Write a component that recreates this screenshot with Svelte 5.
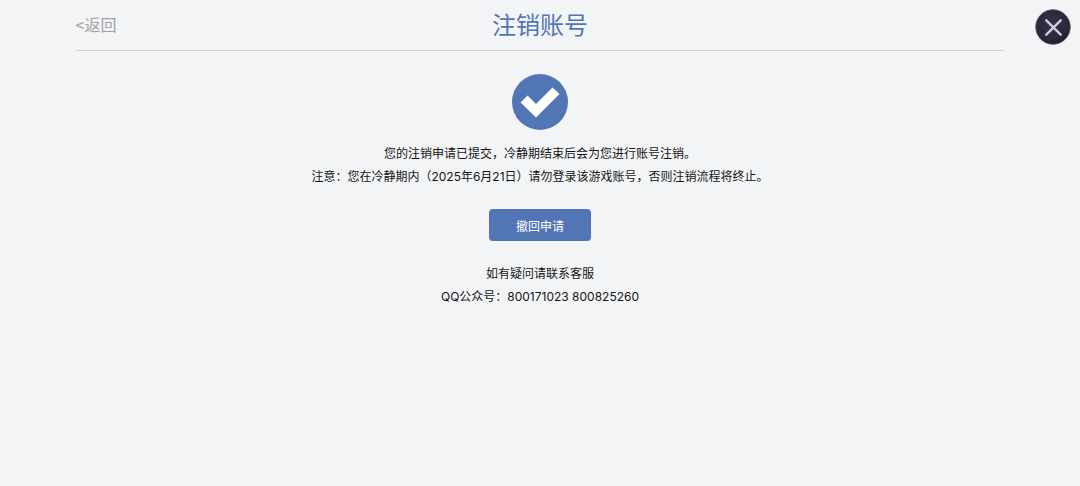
<script lang="ts">
	let deadline = $state('2025年6月21日');
	let accounts = $state(['800171023', '800825260']);
</script>

<div class="page">
	<header>
		<a class="back" href="#back">&lt;返回</a>
		<h1>注销账号</h1>
	</header>

	<button class="close" type="button" aria-label="关闭">
		<svg viewBox="0 0 36 36" aria-hidden="true">
			<defs>
				<radialGradient id="disc" cx="0.45" cy="0.4" r="0.6">
					<stop offset="0" stop-color="#34324c" />
					<stop offset="0.8" stop-color="#292739" />
					<stop offset="1" stop-color="#1e1d29" />
				</radialGradient>
			</defs>
			<circle cx="18" cy="18" r="17.2" fill="url(#disc)" stroke="#504f5e" stroke-width="1" />
			<path
				d="M11.3 11.3 25.7 25.7M25.7 11.3 11.3 25.7"
				fill="none"
				stroke="#cfcdd0"
				stroke-width="2.4"
				stroke-linecap="round"
			/>
		</svg>
	</button>

	<main>
		<svg class="check" viewBox="0 0 56 56" aria-hidden="true">
			<circle cx="28" cy="28" r="28" fill="#5275b6" />
			<path d="M8.5 28.5 15.5 21.5 24 30 40.5 13.5 47.5 20 24 43.5Z" fill="#fff" />
		</svg>

		<div class="message">
			<p>您的注销申请已提交，冷静期结束后会为您进行账号注销。</p>
			<p>注意：您在冷静期内（{deadline}）请勿登录该游戏账号，否则注销流程将终止。</p>
		</div>

		<button class="revoke" type="button">撤回申请</button>

		<div class="message">
			<p>如有疑问请联系客服</p>
			<p>QQ公众号：{accounts.join(' ')}</p>
		</div>
	</main>
</div>

<style>
	:global(body) {
		background: #f2f4f6;
	}

	.page {
		position: relative;
		padding: 0 7%;

		color: #151515;
		font-family: Inter, 'Noto Sans CJK SC', sans-serif;
		font-size: 12px;
	}

	header {
		display: grid;
		grid-template-columns: 1fr auto 1fr;
		align-items: center;

		padding: 6px 0 9px;
		border-bottom: 1px solid #cdcfd2;
	}

	.back {
		justify-self: start;

		color: #a0a1a3;
		font-family: 'Noto Sans CJK SC', sans-serif;
		font-size: 16px;
		text-decoration: none;
	}

	h1 {
		margin: 0;

		color: #5275b6;
		font-family: 'Noto Sans CJK SC', sans-serif;
		font-size: 24px;
		font-weight: 400;
		line-height: 35px;
	}

	.close {
		position: absolute;
		top: 9px;
		right: 9px;

		width: 36px;
		height: 36px;
		padding: 0;
		border: 0;
		border-radius: 50%;

		background: none;
		cursor: pointer;
	}

	.close svg {
		display: block;
	}

	main {
		display: flex;
		flex-direction: column;
		align-items: center;

		padding: 23px 0;
	}

	.check {
		width: 56px;
		height: 56px;
		margin-bottom: 12px;
	}

	.message {
		text-align: center;
		line-height: 23px;
	}

	.message p {
		margin: 0;
	}

	.revoke {
		width: 102px;
		height: 32px;
		margin: 21px 0;
		padding: 0;
		border: 0;
		border-radius: 4px;

		background: #5275b6;
		color: #fff;
		font: inherit;
		cursor: pointer;
	}
</style>
